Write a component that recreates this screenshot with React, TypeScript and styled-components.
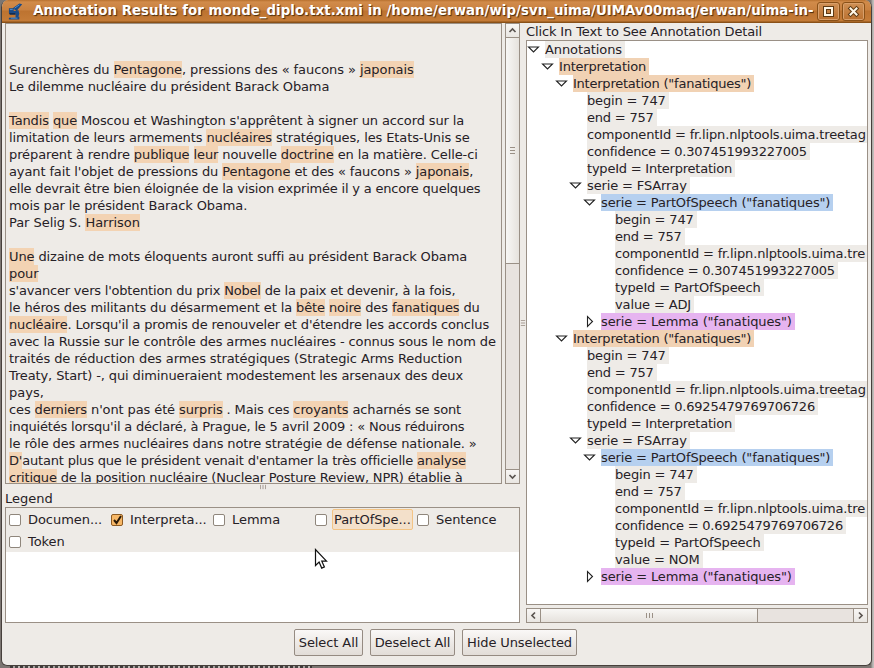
import React from 'react';
import styled, { createGlobalStyle } from 'styled-components';

const Global = createGlobalStyle`
  * { box-sizing: border-box; }
  html, body { margin: 0; padding: 0; overflow: hidden; background: #c9c6c4; }
  body { font: 13px/17px "DejaVu Sans", Verdana, sans-serif; color: #262126; }
`;

const Desktop = styled.div`
  width: 874px; height: 668px; overflow: hidden; padding-left: 1px;
  background: repeating-linear-gradient(90deg, #3f3b3a 0 3px, #a5a19e 3px 5px, #4a4644 5px 8px, #bdb9b6 8px 10px) 10px 100% / 302px 2px no-repeat,
    linear-gradient(90deg, #7c7672 871px, #a9a5a2 872px, #c8c5c2 874px);
`;
const Window = styled.div`
  width: 871px; height: 666px; display: flex; flex-direction: column;
  border: solid #47403c; border-width: 0 1px 1px 1px;
  border-radius: 7px 7px 6px 6px; background: #eeebe7; overflow: hidden;
`;
const TitleBar = styled.header`
  height: 23px; flex: none; display: flex; align-items: center; padding: 0 4px 1px 5px;
  background: linear-gradient(#b8712f, #d18b4a 2px, #c98140 10px, #bd7330 11px, #c57c38 21px, #8a5118 22px);
`;
const Title = styled.h1`
  flex: none; width: 781px; margin: 0 3px 1px 10px; overflow: hidden; white-space: pre;
  font-size: 13.33px; line-height: 20px; font-weight: bold; letter-spacing: 0.04px; color: #fff;
  text-shadow: 1px 1px 1px #4a2b0c;
`;
const WinButton = styled.span`
  width: 24px; height: 19px; margin-right: 2px; display: grid; place-items: center;
  border: 1px solid #8a5118; border-radius: 3px;
  background: linear-gradient(#cf9055, #bb7130); box-shadow: inset 0 0 0 1px #d9a06b;
`;
const Body = styled.main`
  flex: 1; min-height: 0; display: grid; grid-template-columns: 515px 6px 342px; padding-left: 3px;
  grid-template-rows: 600px 1fr;
`;
const Column = styled.section`display: flex; flex-direction: column; min-width: 0;`;
const TextRow = styled.div`display: flex; gap: 3px; height: 461px;`;
const TextPane = styled.div`
  width: 497px; border: 1px solid #9a9086; padding: 3px 3px 0; overflow: hidden;
`;
const Line = styled.div<{ $ls?: number }>`
  height: 17px; white-space: pre; letter-spacing: ${p => p.$ls ?? 0}px;
`;
const Mark = styled.mark`display: inline-block; height: 17px; color: inherit; background: #f3d3b3;`;
const Bar = styled.div<{ $v?: boolean }>`
  display: flex; flex: none; flex-direction: ${p => (p.$v ? 'column' : 'row')};
  width: ${p => (p.$v ? '15px' : 'auto')}; height: ${p => (p.$v ? 'auto' : '15px')};
  border: 1px solid #9a9086; background: #e8e3df;
`;
const Arrow = styled.span`
  flex: none; width: 13px; height: 13px; display: grid; place-items: center; background: linear-gradient(#f8f6f4, #e9e6e2);
`;
const Thumb = styled.div<{ $v?: boolean; $len: number }>`
  flex: none; display: grid; place-items: center; border: solid #9a9086;
  border-width: ${p => (p.$v ? '1px 0' : '0 1px')};
  ${p => (p.$v ? 'height' : 'width')}: ${p => p.$len}px;
  background: linear-gradient(${p => (p.$v ? '90deg' : '180deg')}, #f8f7f5, #e6e2dd);
`;
const Spring = styled.span`flex: 1;`;
const Edge = styled.span<{ $v?: boolean }>`
  flex: none; background: #9a9086; ${p => (p.$v ? 'height: 1px;' : 'width: 1px;')}
`;
const Split = styled.div<{ $v?: boolean }>`
  display: grid; place-items: center; ${p => (p.$v ? '' : 'height: 6px;')}
`;
const Legend = styled.div`height: 17px; line-height: 17px;`;
const LegendBox = styled.div`height: 116px; border: 1px solid #9a9086; background: #fff;`;
const LegendGrid = styled.div`
  height: 44px; display: grid; grid-template-columns: repeat(5, 102px); grid-auto-rows: 22px;
  padding-left: 3px; background: #eeebe7;
`;
const Item = styled.label`display: flex; align-items: center; gap: 5px; height: 23px;`;
const Box = styled.i<{ $on?: boolean }>`
  width: 12px; height: 12px; display: grid; place-items: center; border: 1px solid ${p => (p.$on ? '#8d5a22' : '#8f867c')};
  border-radius: 2px; background: ${p => (p.$on ? '#f6b766' : '#fff')};
`;
const ItemText = styled.span<{ $hot?: boolean }>`
  height: 21px; padding: 0 1px; line-height: 19px; white-space: pre; border: 1px solid ${p => (p.$hot ? '#f3c485' : 'transparent')};
  border-radius: 2px; background: ${p => (p.$hot ? '#f3e0ca' : 'none')}; letter-spacing: -0.05px;
`;
const Heading = styled.div`height: 17px; line-height: 17px; white-space: pre; letter-spacing: -0.13px;`;
const Tree = styled.div`
  height: 565px; border: 1px solid #9a9086; background: #fff; overflow: hidden; margin-bottom: 3px;
`;
const Node = styled.div<{ $d: number }>`
  display: flex; height: 17px; padding-left: ${p => p.$d * 14}px;
`;
const Toggle = styled.span`flex: none; width: 18px; height: 17px; display: flex; align-items: center;`;
const NodeText = styled.span<{ $bg: string; $ls: number; $fill?: boolean }>`
  flex: ${p => (p.$fill ? '1 0 auto' : 'none')}; padding-right: ${p => (p.$fill ? 0 : 3)}px;
  background: ${p => p.$bg}; letter-spacing: ${p => p.$ls}px; white-space: pre; height: 17px;
`;
const Actions = styled.footer`grid-column: 1 / -1; display: flex; gap: 7px; padding: 6px 0 0 289px;`;
const Button = styled.button<{ $w: number }>`
  width: ${p => p.$w}px; height: 27px; padding: 0; font: inherit; color: inherit; white-space: nowrap;
  letter-spacing: -0.1px;
  border: 1px solid #958b82; border-radius: 2px; background: linear-gradient(#faf8f7, #ebe7e3 60%, #e2ddd8);
`;
const Cursor = styled.svg`position: absolute; left: 314px; top: 548px;`;

const LINES: [string, number?][] = [
  [''], [''],
  ['Surenchères du [Pentagone], pressions des « faucons » [japonais]', -0.08],
  ['Le dilemme nucléaire du président Barack Obama', -0.13],
  [''],
  ["[Tandis] [que] Moscou et Washington s'apprêtent à signer un accord sur la", -0.127],
  ['limitation de leurs armements [nucléaires] stratégiques, les Etats-Unis se', -0.11],
  ['préparent à rendre [publique] [leur] nouvelle [doctrine] en la matière. Celle-ci', -0.107],
  ["ayant fait l'objet de pressions du [Pentagone] et des « faucons » [japonais],", -0.115],
  ['elle devrait être bien éloignée de la vision exprimée il y a encore quelques', -0.2],
  ['mois par le président Barack Obama.', -0.115],
  ['Par Selig S. [Harrison]', -0.05],
  [''],
  ['[Une] dizaine de mots éloquents auront suffi au président Barack Obama', -0.12],
  ['[pour]', -0.1],
  ["s'avancer vers l'obtention du prix [Nobel] de la paix et devenir, à la fois,", -0.2],
  ['le héros des militants du désarmement et la [bête] [noire] des [fanatiques] du', -0.12],
  ["[nucléaire]. Lorsqu'il a promis de renouveler et d'étendre les accords conclus", -0.155],
  ['avec la Russie sur le contrôle des armes nucléaires - connus sous le nom de', -0.11],
  ['traités de réduction des armes stratégiques (Strategic Arms Reduction', -0.1],
  ['Treaty, Start) -, qui diminueraient modestement les arsenaux des deux', -0.12],
  ['pays,'],
  ["ces [derniers] n'ont pas été [surpris] . Mais ces [croyants] acharnés se sont", -0.115],
  ["inquiétés lorsqu'il a déclaré, à Prague, le 5 avril 2009 : « Nous réduirons", -0.19],
  ['le rôle des armes nucléaires dans notre stratégie de défense nationale. »', -0.12],
  ["[D']autant plus que le président venait d'entamer la très officielle [analyse]", -0.19],
  ['[critique] de la position nucléaire (Nuclear Posture Review, NPR) établie à', -0.2],
];

const GRAY = '#eeebe7', PEACH = '#f1d2b4', BLUE = '#b6d0ef', PINK = '#e6b4f0';
type Row = { d: number; t: string; ls: number; bg?: string; s?: 'open' | 'shut'; fill?: boolean };
const branch = (conf: string, pos: string): Row[] => [
  { d: 2, t: 'Interpretation ("fanatiques")', ls: -0.23, bg: PEACH, s: 'open' },
  { d: 3, t: 'begin = 747', ls: -0.15 },
  { d: 3, t: 'end = 757', ls: -0.2 },
  { d: 3, t: 'componentId = fr.lipn.nlptools.uima.treetag', ls: -0.15, fill: true },
  { d: 3, t: 'confidence = ' + conf, ls: -0.23 },
  { d: 3, t: 'typeId = Interpretation', ls: -0.22 },
  { d: 3, t: 'serie = FSArray', ls: -0.13, s: 'open' },
  { d: 4, t: 'serie = PartOfSpeech ("fanatiques")', ls: -0.14, bg: BLUE, s: 'open' },
  { d: 5, t: 'begin = 747', ls: -0.15 },
  { d: 5, t: 'end = 757', ls: -0.2 },
  { d: 5, t: 'componentId = fr.lipn.nlptools.uima.tre', ls: -0.15, fill: true },
  { d: 5, t: 'confidence = ' + conf, ls: -0.23 },
  { d: 5, t: 'typeId = PartOfSpeech', ls: -0.15 },
  { d: 5, t: 'value = ' + pos, ls: -0.12 },
  { d: 4, t: 'serie = Lemma ("fanatiques")', ls: -0.12, bg: PINK, s: 'shut' },
];
const ROWS: Row[] = [
  { d: 0, t: 'Annotations', ls: -0.1, s: 'open' },
  { d: 1, t: 'Interpretation', ls: -0.2, bg: PEACH, s: 'open' },
  ...branch('0.307451993227005', 'ADJ'),
  ...branch('0.6925479769706726', 'NOM'),
];
const LEGEND = ['Documen...', 'Interpreta...', 'Lemma', 'PartOfSpe...', 'Sentence', 'Token'];

const Chevron = ({ r }: { r: number }) => (
  <svg width="9" height="9" viewBox="0 0 9 9">
    <path d="M1.5 6 4.5 3 7.5 6" fill="none" stroke="#5a5450" strokeWidth="1.7" transform={`rotate(${r} 4.5 4.5)`} />
  </svg>
);
const Grip = ({ v, s = 7 }: { v?: boolean; s?: number }) => (
  <svg width={s} height={s} viewBox="0 0 7 7">
    <path d={v ? 'M1 .5h5M1 3.5h5M1 6.5h5' : 'M.5 1v5M3.5 1v5M6.5 1v5'} stroke="#9a9086" />
  </svg>
);
const Glyph = ({ d }: { d: string }) => (
  <svg width="13" height="13" viewBox="0 0 13 13" fill="none">
    <path d={d} stroke="#5e3a14" strokeWidth="4" strokeLinecap="square" />
    <path d={d} stroke="#fff8e8" strokeWidth="2" strokeLinecap="square" />
  </svg>
);

export default function App() {
  return (
    <Desktop>
      <Global />
      <Window>
        <TitleBar>
          <svg width="17" height="18" viewBox="0 0 17 18">
            <path d="m6 6 7-5 3 1-6 7zM2 6h5v3h4v2H2zM9 9l3-1 1 4-1 3h1v3H2v-2h7v-2z" fill="#1a4a86" />
            <path d="M2 11h7v2H3z" fill="#102c55" />
            <path d="m8 6 5-3.500M3 7.500h3M4 16.500h7" stroke="#4f90d2" />
          </svg>
          <Title>Annotation Results for monde_diplo.txt.xmi in /home/erwan/wip/svn_uima/UIMAv00maq/erwan/uima-in-</Title>
          <WinButton><Glyph d="M3 3h7v7H3z" /></WinButton>
          <WinButton><Glyph d="m3.500 3.500 6 6M9.500 3.500l-6 6" /></WinButton>
        </TitleBar>
        <Body>
          <Column>
            <TextRow>
              <TextPane>
                {LINES.map(([t, ls], i) => (
                  <Line key={i} $ls={ls}>
                    {t.split(/[[\]]/).map((s, j) => (j % 2 ? <Mark key={j}>{s}</Mark> : s))}
                  </Line>
                ))}
              </TextPane>
              <Bar $v>
                <Arrow><Chevron r={0} /></Arrow>
                <Thumb $v $len={227}><Grip v /></Thumb>
                <Spring /><Edge $v />
                <Arrow><Chevron r={180} /></Arrow>
              </Bar>
            </TextRow>
            <Split><Grip s={6} /></Split>
            <Legend>Legend</Legend>
            <LegendBox>
              <LegendGrid>
                {LEGEND.map((l, i) => (
                  <Item key={l}>
                    <Box $on={i === 1}>
                      {i === 1 && <svg width="10" height="10"><path d="m2 5 2.500 3L9 1" fill="none" stroke="#2a1a08" strokeWidth="2" /></svg>}
                    </Box>
                    <ItemText $hot={i === 3}>{l}</ItemText>
                  </Item>
                ))}
              </LegendGrid>
            </LegendBox>
          </Column>
          <Split $v><Grip v s={6} /></Split>
          <Column>
            <Heading>Click In Text to See Annotation Detail</Heading>
            <Tree>
              {ROWS.map((r, i) => (
                <Node key={i} $d={r.d}>
                  <Toggle>
                    {r.s && (
                      <svg width="13" height="13" viewBox="0 0 13 13">
                        <path d={r.s === 'open' ? 'M1.500 4h10L6.500 9z' : 'M4.500 1.500v10l5-5z'} fill="#fff" stroke="#222" strokeWidth="1.1" />
                      </svg>
                    )}
                  </Toggle>
                  <NodeText $bg={r.bg ?? GRAY} $ls={r.ls} $fill={r.fill}>{r.t}</NodeText>
                </Node>
              ))}
            </Tree>
            <Bar>
              <Arrow><Chevron r={-90} /></Arrow>
              <Thumb $len={218}><Grip /></Thumb>
              <Spring /><Edge />
              <Arrow><Chevron r={90} /></Arrow>
            </Bar>
          </Column>
          <Actions>
            <Button $w={69}>Select All</Button>
            <Button $w={85}>Deselect All</Button>
            <Button $w={115}>Hide Unselected</Button>
          </Actions>
        </Body>
      </Window>
      <Cursor width="14" height="22" viewBox="0 0 14 22">
        <path d="M1.500 1.500v16l3.600-3.400 2.600 6 2.700-1.200-2.600-5.700h4.700z" fill="#fff" stroke="#111" strokeWidth="1.2" />
      </Cursor>
    </Desktop>
  );
}
